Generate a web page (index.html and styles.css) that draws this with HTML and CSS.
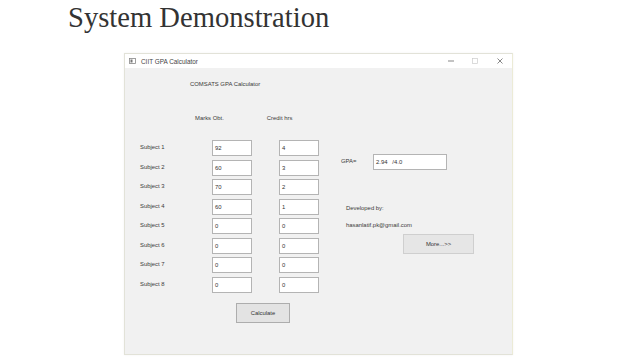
FILE: index.html
```html
<!DOCTYPE html>
<html>
<head>
<meta charset="utf-8">
<link rel="stylesheet" href="styles.css">
</head>
<body>
<h1 class="slide-title">System Demonstration</h1>
<div class="window">
  <div class="titlebar">
    <svg class="app-icon" width="7" height="6" viewBox="0 0 7 6">
      <rect x="0.5" y="0.5" width="6" height="5" fill="#fff" stroke="#888" stroke-width="0.8"/>
      <rect x="1.5" y="1.5" width="2" height="3" fill="#777"/>
    </svg>
    <span class="title-text">CIIT GPA Calculator</span>
    <div class="controls">
      <svg class="ctl" width="8" height="8" viewBox="0 0 8 8"><line x1="1" y1="4" x2="7" y2="4" stroke="#555" stroke-width="0.7"/></svg>
      <svg class="ctl" width="8" height="8" viewBox="0 0 8 8"><rect x="1.5" y="1.5" width="5" height="5" fill="none" stroke="#ccc" stroke-width="0.7"/></svg>
      <svg class="ctl" width="8" height="8" viewBox="0 0 8 8"><path d="M1.5 1.5 L6.5 6.5 M6.5 1.5 L1.5 6.5" stroke="#555" stroke-width="0.7"/></svg>
    </div>
  </div>
  <div class="client">
    <div class="left">
      <div class="heading">COMSATS GPA Calculator</div>
      <div class="colheads"><span class="ch1">Marks Obt.</span><span class="ch2">Credit hrs</span></div>
      <div class="rows">
        <span class="lbl">Subject 1</span><div class="tb">92</div><div class="tb">4</div>
        <span class="lbl">Subject 2</span><div class="tb">60</div><div class="tb">3</div>
        <span class="lbl">Subject 3</span><div class="tb">70</div><div class="tb">2</div>
        <span class="lbl">Subject 4</span><div class="tb">60</div><div class="tb">1</div>
        <span class="lbl">Subject 5</span><div class="tb">0</div><div class="tb">0</div>
        <span class="lbl">Subject 6</span><div class="tb">0</div><div class="tb">0</div>
        <span class="lbl">Subject 7</span><div class="tb">0</div><div class="tb">0</div>
        <span class="lbl">Subject 8</span><div class="tb">0</div><div class="tb">0</div>
      </div>
      <div class="btn calc">Calculate</div>
    </div>
    <div class="right">
      <div class="gparow"><span class="gpalbl">GPA=</span><div class="tb gpa">2.94&nbsp;&nbsp;&nbsp;/4.0</div></div>
      <div class="dev">Developed by:</div>
      <div class="email">hasanlatif.pk@gmail.com</div>
      <div class="btn more">More...&gt;&gt;</div>
    </div>
  </div>
</div>
</body>
</html>
```
FILE: styles.css
```css
html, body {
  margin: 0;
  padding: 0;
  background: #ffffff;
  width: 640px;
  height: 360px;
  overflow: hidden;
}
.slide-title {
  margin: 0;
  padding: 3px 0 0 68px;
  height: 50px;
  box-sizing: border-box;
  font-family: "Liberation Serif", "Times New Roman", serif;
  font-weight: normal;
  font-size: 28.6px;
  line-height: 30px;
  color: #333333;
}
.window {
  margin: 3px 0 0 124px;
  width: 389px;
  height: 302px;
  box-sizing: border-box;
  border: 1px solid #e2e2d8;
  border-right-color: #ecebd6;
  background: #f1f1f1;
  box-shadow: 0 0 2px rgba(0,0,0,0.06);
  font-family: "Liberation Sans", Arial, sans-serif;
  color: #3a3a3a;
}
.titlebar {
  height: 14px;
  background: #ffffff;
  display: flex;
  align-items: center;
}
.app-icon {
  margin-left: 4px;
}
.title-text {
  margin-left: 5px;
  font-size: 6.4px;
  color: #444;
}
.controls {
  margin-left: auto;
  display: flex;
  align-items: center;
}
.ctl {
  margin-right: 17px;
}
.ctl:nth-child(1) { margin-right: 16px; }
.ctl:nth-child(3) { margin-right: 8px; }
.client {
  display: flex;
  font-size: 5.9px;
}
.left {
  padding-left: 15px;
  width: 179px;
}
.heading {
  margin-top: 11px;
  margin-left: 50px;
  line-height: 10px;
  height: 10px;
}
.colheads {
  margin-top: 24px;
  height: 10px;
  line-height: 10px;
  display: flex;
}
.ch1 { margin-left: 55px; }
.ch2 { margin-left: 43px; }
.rows {
  margin-top: 17px;
  display: grid;
  grid-template-columns: 45px 40px 40px;
  column-gap: 27px;
  grid-auto-rows: 16px;
  row-gap: 3.5px;
  align-items: center;
}
.lbl {
  align-self: start;
  line-height: 14px;
  white-space: nowrap;
}
.tb {
  height: 16px;
  box-sizing: border-box;
  background: #ffffff;
  border: 1px solid #b4b4b4;
  padding-left: 2px;
  line-height: 14px;
  font-size: 5.9px;
  color: #333;
}
.btn {
  box-sizing: border-box;
  background: #e3e3e3;
  border: 1px solid #adadad;
  display: flex;
  align-items: center;
  justify-content: center;
  color: #333;
}
.calc {
  margin-top: 10px;
  margin-left: 96px;
  width: 54px;
  height: 20px;
}
.right {
  padding-left: 22px;
  padding-top: 86px;
}
.gparow {
  display: flex;
  align-items: center;
}
.gpalbl {
  width: 32px;
  margin-top: -2px;
}
.gpa {
  width: 74px;
}
.dev {
  margin-top: 33px;
  margin-left: 5px;
  line-height: 10px;
}
.email {
  margin-top: 7px;
  margin-left: 5px;
  line-height: 10px;
}
.more {
  margin-top: 4px;
  margin-left: 62px;
  width: 71px;
  height: 20px;
  background: #e6e6e6;
  border-color: #cfcfcf;
}
```
